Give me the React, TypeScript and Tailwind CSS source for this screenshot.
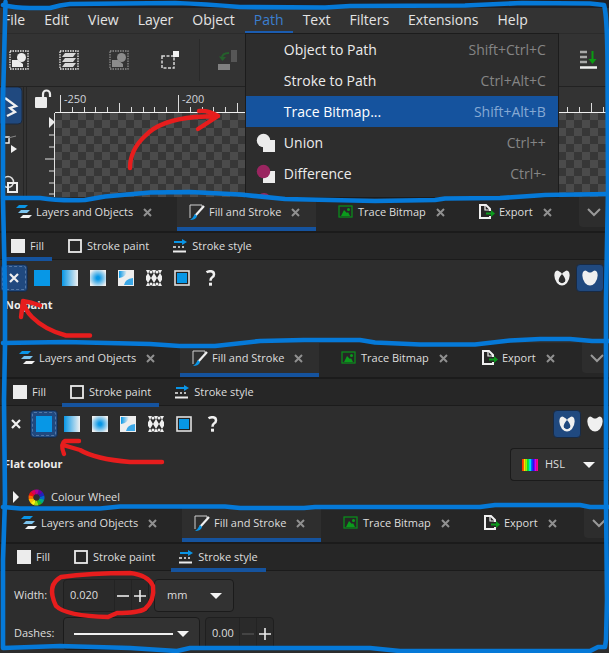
import type { ReactNode } from "react";

const menus = ["File", "Edit", "View", "Layer", "Object", "Path", "Text", "Filters", "Extensions", "Help"];

const pathMenu = [
  { label: "Object to Path", keys: "Shift+Ctrl+C" },
  { label: "Stroke to Path", keys: "Ctrl+Alt+C" },
  { label: "Trace Bitmap...", keys: "Shift+Alt+B", active: true },
  { label: "Union", keys: "Ctrl++", icon: "union" },
  { label: "Difference", keys: "Ctrl+-", icon: "difference" },
];

function Shape({ icon }: { icon?: string }) {
  if (!icon) return <span className="w-5" />;
  return (
    <svg className="h-5 w-5" viewBox="0 0 20 20">
      <rect x="7" y="7" width="12" height="12" fill="#ececec" />
      <circle cx="7.500" cy="7.500" r="6.700" fill={icon === "union" ? "#ececec" : "#9a2560"} />
    </svg>
  );
}

function MenuBar() {
  return (
    <nav className="relative flex h-[25px] shrink-0 gap-px bg-[#333333] text-[14px]">
      {menus.map((m) => (
        <div key={m} className="relative flex">
          <button
            className={
              m === "Path"
                ? "h-[25px] border-b-2 border-[#1b5cb0] px-[9px] leading-[22px] text-[#3b7fd0]"
                : "h-[25px] border-b-2 border-transparent px-[9px] leading-[22px] text-[#e4e4e4]"
            }
          >
            {m}
          </button>
          {m === "Path" && (
            <div className="absolute top-full left-0 z-10 h-[165px] w-[314px] overflow-hidden border border-[#1c1c1c] bg-[#2d2d2d]">
              {pathMenu.map((i) => (
                <button
                  key={i.label}
                  className={
                    i.active
                      ? "flex h-[31px] w-full items-center bg-[#15539e] pr-3 pl-[10px] text-white"
                      : "flex h-[31px] w-full items-center pr-3 pl-[10px] text-[#ececec]"
                  }
                >
                  <Shape icon={i.icon} />
                  <span className="ml-2">{i.label}</span>
                  <span className={i.active ? "ml-auto text-[#86a9d4]" : "ml-auto text-[#858585]"}>{i.keys}</span>
                </button>
              ))}
              <svg className="ml-[12px] h-4 w-5" viewBox="0 0 20 16">
                <circle cx="6" cy="11" r="7" fill="#9a2560" />
              </svg>
            </div>
          )}
        </div>
      ))}
    </nav>
  );
}

function SelectIcon({ kind }: { kind: "all" | "layers" | "none" }) {
  const c = kind === "none" ? "#8c8c8c" : "#ececec";
  return (
    <svg className="h-5 w-5" viewBox="0 0 20 20">
      <rect x="1" y="1" width="18" height="18" fill="none" stroke={c} strokeWidth="1.300" strokeDasharray="1.500 1" />
      {kind === "layers" ? (
        <g fill="#d8d8d8">
          <path d="M6 3h11l-3 4H3zM6 8h11l-3 4H3zM6 13h11l-3 4H3z" />
        </g>
      ) : (
        <g fill={c}>
          <path d="M3 10h6l5 4v3H3z" />
          <circle cx="12.500" cy="7.500" r="4.500" />
        </g>
      )}
    </svg>
  );
}

function Toolbar() {
  return (
    <div className="flex h-[54px] shrink-0 items-center border-y border-t-[#2b2b2b] border-b-[#222] bg-[#333333] pl-[9px] pr-3">
      <button aria-label="Select all"><SelectIcon kind="all" /></button>
      <button className="ml-[30px]" aria-label="Select in all layers"><SelectIcon kind="layers" /></button>
      <button className="ml-[30px]" aria-label="Deselect"><SelectIcon kind="none" /></button>
      <button className="ml-8" aria-label="Touch selection">
        <svg className="h-5 w-5" viewBox="0 0 20 20">
          <rect x="1" y="6" width="12" height="12" fill="none" stroke="#d8d8d8" strokeWidth="1.500" strokeDasharray="3 1.500" />
          <rect x="12" y="1" width="6" height="6" fill="#f2f2f2" />
        </svg>
      </button>
      <span className="ml-[18px] h-[42px] w-px bg-[#292929]" />
      <button className="ml-[17px]" aria-label="Rotate left">
        <svg className="h-5 w-[22px]" viewBox="0 0 22 20">
          <rect x="14" y="0" width="6" height="12" fill="#565656" />
          <rect x="1" y="14" width="12" height="6" fill="#808080" />
          <path d="M12 3q-7 0-7 5" fill="none" stroke="#25602c" strokeWidth="2" />
          <path d="M2 6.500l3.500 4.500 3.500-4z" fill="#25602c" />
        </svg>
      </button>
      <button className="ml-auto" aria-label="Lower to bottom">
        <svg className="h-5 w-[18px]" viewBox="0 0 18 20">
          <path d="M1 2h7M1 7h7M1 12h7" stroke="#a8a8a8" strokeWidth="2.500" />
          <path d="M13.500 1v9" stroke="#0a9a12" strokeWidth="2" />
          <path d="M9.500 9h8l-4 5z" fill="#0a9a12" />
          <path d="M1 17.500h17" stroke="#f0f0f0" strokeWidth="2.500" />
        </svg>
      </button>
    </div>
  );
}

const ticks = Array.from({ length: 47 }, (_, i) => i);

function Canvas() {
  return (
    <div className="flex h-[110px] bg-[#333333]">
      <div className="w-6 shrink-0 border-r border-[#252525]">
        <svg className="h-[110px] w-6" viewBox="0 0 24 110">
          <rect x="-4" y="0" width="26" height="37" rx="4" fill="#20497f" stroke="#1b2a40" />
          <path d="M5 11l11 8-6 2 5 4-8 4" fill="none" stroke="#f0f0f0" strokeWidth="2.300" />
          <rect x="3" y="50" width="6" height="6" fill="#222" stroke="#eee" strokeWidth="1.500" />
          <path d="M8 51l8-2" stroke="#888" />
          <path d="M11 58l6 4-6 4z" fill="#f0f0f0" />
          <circle cx="8" cy="95" r="5.500" fill="none" stroke="#ddd" strokeWidth="1.500" />
          <rect x="8" y="96" width="9" height="9" fill="none" stroke="#eee" strokeWidth="2" />
        </svg>
      </div>
      <div className="ml-[2px] w-[29px] shrink-0 border-l border-[#252525]">
        <svg className="h-[110px] w-7" viewBox="0 0 28 110">
          <rect x="8" y="10" width="12" height="11" rx="1" fill="#ececec" />
          <path d="M16 10V7a3.500 3.500 0 0 1 7 0v3" fill="none" stroke="#ececec" strokeWidth="2.200" />
          <path d="M22 30l6 5-6 6z" fill="#ececec" />
          <path d="M27.500 26v84M22 48h6M22 60h6M18 72h10M22 84h6M22 96h6M22 107h6" stroke="#e0e0e0" />
        </svg>
      </div>
      <div className="min-w-0 flex-1">
        <svg className="block h-[26px] w-full">
          {ticks.map((i) => {
            const x = 5.5 + Math.round(i * 11.8);
            const top = i % 10 === 0 ? 8 : i % 5 === 0 ? 16 : 20;
            return <path key={i} d={`M${x} ${top}V26`} stroke="#dcdcdc" />;
          })}
          <path d="M0 25.500H700" stroke="#f0f0f0" />
          <text x="9" y="16" fill="#d0d4da" fontSize="11">-250</text>
          <text x="127" y="16" fill="#d0d4da" fontSize="11">-200</text>
        </svg>
        <div className="h-[84px] bg-[repeating-conic-gradient(#4b4b4b_0_25%,#373737_0_50%)] bg-[length:16px_16px] bg-[position:-1px_-1px]" />
      </div>
    </div>
  );
}

function LayersIcon() {
  return (
    <svg className="h-4 w-4" viewBox="0 0 16 16">
      <path d="M3 1h9l-3 3H0z" fill="#0a95e6" />
      <path d="M5 6h9l-3 3H2z" fill="#7cc4ee" />
      <path d="M7 11h9l-3 3H4z" fill="#f0f0f0" />
    </svg>
  );
}
function BrushIcon() {
  return (
    <svg className="h-4 w-4" viewBox="0 0 16 16">
      <path d="M1 14V1h12v2" fill="none" stroke="#cfcfcf" />
      <path d="M15 2L6 12" stroke="#f0f0f0" strokeWidth="2.200" />
      <path d="M6 10l2 2q-1 4-7 4 3-2 5-6z" fill="#0a95e6" />
    </svg>
  );
}
function TraceIcon() {
  return (
    <svg className="h-4 w-4" viewBox="0 0 16 16">
      <rect x="1" y="2" width="13" height="11" fill="none" stroke="#0b8a1c" strokeWidth="1.300" />
      <path d="M3 12l3-6 3 3 1-1 2 4z" fill="#0b9a1c" />
      <circle cx="10.500" cy="5.500" r="1.500" fill="#0b9a1c" />
    </svg>
  );
}
function ExportIcon() {
  return (
    <svg className="h-4 w-4" viewBox="0 0 16 16">
      <path d="M11 7V5L7 1H1v13h10v-2" fill="none" stroke="#f0f0f0" strokeWidth="2" />
      <path d="M6 1v5h5" fill="none" stroke="#f0f0f0" strokeWidth="1.200" />
      <path d="M7 9.500h6" stroke="#0b9a1c" strokeWidth="2" />
      <path d="M12 6l4 3.500-4 3.500z" fill="#0b9a1c" />
    </svg>
  );
}
function Cross() {
  return (
    <svg className="h-[9px] w-[9px]" viewBox="0 0 9 9">
      <path d="M1 1l7 7M8 1l-7 7" stroke="#909090" strokeWidth="2" />
    </svg>
  );
}

function DockTab({ icon, label, width, active }: { icon: ReactNode; label: string; width: string; active?: boolean }) {
  return (
    <div
      className={`${width} flex h-[34px] shrink-0 items-center border-b-4 pl-3 ${
        active ? "border-[#15539e] bg-[#2e2e2e]" : "border-transparent"
      }`}
    >
      <button className="flex items-center gap-1 whitespace-nowrap">
        {icon}
        {label}
      </button>
      <button className="ml-[10px]" aria-label={`Close ${label}`}>
        <Cross />
      </button>
    </div>
  );
}

function Dock({ pad, subPad, sub, children }: { pad: string; subPad: string; sub: string; children: ReactNode }) {
  const subs = [
    { label: "Fill", icon: <rect width="14" height="14" fill="#ececec" /> },
    { label: "Stroke paint", icon: <rect x="1" y="1" width="12" height="12" fill="none" stroke="#ececec" strokeWidth="1.800" /> },
    {
      label: "Stroke style",
      icon: (
        <g>
          <path d="M1 3h9" stroke="#0a95e6" strokeWidth="2" />
          <path d="M9 0l5 3-5 3z" fill="#0a95e6" />
          <path d="M0 8h3M5 8h2M9 8h2" stroke="#ececec" strokeWidth="1.500" />
          <path d="M0 12.500h13" stroke="#ececec" strokeWidth="2" />
        </g>
      ),
    },
  ];
  return (
    <>
      <div className={`${pad} flex overflow-hidden border-b border-[#1b1b1b] bg-[#262626]`}>
        <DockTab icon={<LayersIcon />} label="Layers and Objects" width="w-[173px]" />
        <DockTab icon={<BrushIcon />} label="Fill and Stroke" width="w-[139px]" active />
        <div className="w-[10px] shrink-0" />
        <DockTab icon={<TraceIcon />} label="Trace Bitmap" width="w-[141px]" />
        <DockTab icon={<ExportIcon />} label="Export" width="w-[112px]" />
        <button className="flex h-[30px] flex-1 shrink-0 items-center rounded-bl bg-[#2d2d2d] pl-2" aria-label="More tabs">
          <svg className="h-3 w-[14px] shrink-0" viewBox="0 0 14 12">
            <path d="M1 3l6 6 6-6" fill="none" stroke="#999" strokeWidth="2" />
          </svg>
        </button>
      </div>
      <div className={`${subPad} flex h-[28px] gap-2 border-t border-b border-[#1b1b1b] bg-[#262626]`}>
        {subs.map((s) => (
          <button
            key={s.label}
            className={`flex h-7 items-center gap-[5px] border-b-4 px-2 pt-[2px] whitespace-nowrap ${
              s.label === sub ? "border-[#15539e]" : "border-transparent"
            }`}
          >
            <svg className="h-[14px] w-[14px]" viewBox="0 0 14 14">{s.icon}</svg>
            {s.label}
          </button>
        ))}
      </div>
      {children}
    </>
  );
}

const heart = "M1 2Q3-1 6 2Q8 3 10 2Q13-1 15 2Q17 7 13 13Q8 18 3 13Q-1 7 1 2Z";

function PaintRow({ id, selected, rule, pad }: { id: string; selected: number; rule: number; pad: string }) {
  const icons = [
    <path d="M4 4l8 8M12 4l-8 8" stroke="#f0f0f0" strokeWidth="2.200" />,
    <rect width="16" height="16" fill="#0797e6" />,
    <rect width="16" height="16" fill={`url(#${id}l)`} />,
    <rect width="16" height="16" fill={`url(#${id}r)`} />,
    <g>
      <rect width="16" height="16" fill="#eee" />
      <path d="M1 1h8q-1 6-8 7z" fill={`url(#${id}l)`} />
      <path d="M15 8v7H6q1-6 9-7z" fill="#3ba7e6" />
    </g>,
    <g fill="#f0f0f0">
      {[2, 8, 14].map((x) => (
        <path key={x} d={`M${x - 2} 0h4l-2 4zM${x} 3l3 5-3 5-3-5zM${x - 2} 16h4l-2-4z`} />
      ))}
      <circle cx="5" cy="2" r="1.500" />
      <circle cx="11" cy="2" r="1.500" />
      <circle cx="5" cy="14" r="1.500" />
      <circle cx="11" cy="14" r="1.500" />
    </g>,
    <g>
      <rect x="1" y="1" width="14" height="14" fill="#222" stroke="#e0e0e0" strokeWidth="1.600" />
      <rect x="3" y="3" width="10" height="10" fill="#0797e6" />
    </g>,
    <g>
      <path d="M4.500 2.200Q6 1.200 8.500 1.200Q12 1.200 12 4.500Q12 6.500 10 7.500Q8.500 8.500 8.500 10.800" fill="none" stroke="#f0f0f0" strokeWidth="2.500" />
      <rect x="7" y="12.700" width="3" height="3" fill="#f0f0f0" />
    </g>,
  ];
  const names = ["No paint", "Flat colour", "Linear gradient", "Radial gradient", "Mesh gradient", "Pattern", "Swatch", "Unset"];
  const on = "border-[#182a44] bg-[#20497f] outline-1 outline-dashed -outline-offset-3 outline-[#5377a5]";
  const drop = rule === 0 ? "#20497f" : "#2d2d2d";
  return (
    <div className={`${pad} flex pt-1`}>
      {icons.map((g, i) => (
        <button
          key={i}
          aria-label={names[i]}
          className={`flex h-7 w-7 items-center justify-center rounded border ${i === selected ? on : "border-transparent"}`}
        >
          <svg className="h-4 w-4" viewBox="0 0 16 16">
            <defs>
              <linearGradient id={`${id}l`}>
                <stop offset="0" stopColor="#0797e6" />
                <stop offset="1" stopColor="#f0f0f0" />
              </linearGradient>
              <radialGradient id={`${id}r`} r="0.600">
                <stop offset="0.150" stopColor="#0797e6" />
                <stop offset="1" stopColor="#f0f0f0" />
              </radialGradient>
            </defs>
            {g}
          </svg>
        </button>
      ))}
      <div className="ml-auto flex">
        {[0, 1].map((i) => (
          <button
            key={i}
            aria-label={i ? "Fill non-zero" : "Fill even-odd"}
            className={`flex h-7 w-7 items-center justify-center rounded border ${
              i === rule ? "border-[#182a44] bg-[#20497f]" : "border-transparent"
            }`}
          >
            <svg className="h-4 w-4" viewBox="0 0 16 16">
              <path d={heart} fill="#f0f0f0" />
              {i === 0 && (
                <g>
                  <path d="M5.500 0L8 4L10.500 0z" fill={drop} />
                  <path d="M8 4Q12.500 9 11 11.500Q8 15 5 11.500Q3.500 9 8 4z" fill={drop} />
                </g>
              )}
            </svg>
          </button>
        ))}
      </div>
    </div>
  );
}

function Caret({ place }: { place: string }) {
  return (
    <svg className={`${place} pointer-events-none h-[6px] w-3`} viewBox="0 0 12 6">
      <path d="M0 0h12L6 6z" fill="#f4f4f4" />
    </svg>
  );
}

function Spin({ id, label, value, width, dim }: { id: string; label?: string; value: string; width: string; dim?: boolean }) {
  return (
    <div className={`${width} flex h-[33px] items-stretch rounded border border-[#1f1f1f] bg-[#2a2a2a]`}>
      <input id={id} aria-label={label} defaultValue={value} className="min-w-0 flex-1 bg-transparent pl-[6px] outline-none" />
      <button className="flex w-[17px] items-center justify-center border-l border-[#232323]" aria-label="Decrease">
        <svg className="h-3 w-3" viewBox="0 0 12 12"><path d="M0 6h12" stroke={dim ? "#4c4c4c" : "#ececec"} strokeWidth="1.600" /></svg>
      </button>
      <button className="flex w-[17px] items-center justify-center border-l border-[#232323]" aria-label="Increase">
        <svg className="h-3 w-3" viewBox="0 0 12 12"><path d="M0 6h12M6 0v12" stroke="#ececec" strokeWidth="1.600" /></svg>
      </button>
    </div>
  );
}

const wheel = ["#e11", "#f60", "#fb0", "#fe1", "#9d1", "#2b2", "#0a8", "#06c", "#22b", "#60a", "#a09", "#d05"];

function Annotations() {
  return (
    <svg className="pointer-events-none absolute inset-0 z-20 h-full w-full" viewBox="0 0 609 653" preserveAspectRatio="none" fill="none" strokeLinecap="round" strokeLinejoin="round">
      <g stroke="#0579d8" strokeWidth="4.600">
        <path d="M3 5Q15 8 30 8L50 8Q60 5 70 4L175 3Q205 4 240 7L325 7.500L350 6L465 5.500L522 3L590 3.500L604 5Q607 15 607.500 60L608 190L606 300L606 500L607 600L606 640L605 647H598L590 651L400 651L370 648L190 648L177 651L130 648L60 646L3 648L3 560L5 500L4 400L5 345L5 290L3 200L3 100L5.500 2" />
        <path d="M3 198L40 198Q60 201 85 200L105 196.500L150 192.500L190 192L240 194.500L285 199L375 201L435 200L445 198.500L500 198L545 195L609 194" />
        <path d="M3 343L65 342L150 344L180 346L215 346L260 341L304 340L360 340L375 342.500L420 344.500L475 344.500L510 340.500L540 339L570 339L592 341L609 341" />
        <path d="M3 507L20 508.500L100 508.500L120 506.500L225 506.500L240 508L304 508L315 507L480 507L495 505L580 505L590 507L608 507" />
      </g>
      <g stroke="#e71d1d" strokeWidth="4.400">
        <path d="M130 168Q130 150 145 136Q160 120 195 117L218 116M199 111Q208 110 218 116L198 129" />
        <path d="M90 335.500H66Q45 330 32 317Q25 310 23 301M21 317L23 301Q31 302 40 305.500" />
        <path d="M162 462H130Q95 459 80 450L63 445M79 441H65Q60 444 64 454" />
        <path d="M61 577Q90 573 130 573Q148 575 153 586Q155 600 145 609Q138 613 117 613L108 617Q66 616 56 606Q46 585 61 577Z" />
      </g>
    </svg>
  );
}

export default function App() {
  return (
    <main className="relative w-full overflow-hidden bg-[#2d2d2d] font-['Open_Sans','Noto_Sans',sans-serif] text-[11px] text-[#dedede]">
      <section className="flex flex-col">
        <div className="h-2 bg-[#1f2025]" />
        <div className="-ml-[6px] flex flex-col">
          <MenuBar />
        </div>
        <Toolbar />
        <Canvas />
      </section>

      <section className="h-[146px]">
        <Dock pad="pl-1" subPad="pl-[3px]" sub="Fill">
          <PaintRow id="a" selected={0} rule={1} pad="pr-[5px]" />
          <h2 className="mt-1 pl-[5px] leading-[18px] font-bold text-[#ececec]">No paint</h2>
        </Dock>
      </section>

      <section className="h-[165px]">
        <Dock pad="pl-[7px]" subPad="pl-[5px]" sub="Stroke paint">
          <PaintRow id="b" selected={1} rule={0} pad="pl-[2px]" />
          <div className="mt-[10px] flex items-center justify-between pl-1">
            <h2 className="font-bold text-[#ececec]">Flat colour</h2>
            <div className="relative flex h-[33px] w-[99px] items-center rounded-l border border-r-0 border-[#1b1b1b] bg-[#323232]">
              <svg className="pointer-events-none absolute left-[11px] h-3 w-4" viewBox="0 0 16 12">
                {["#f30", "#fd0", "#8f0", "#0e4", "#0ee", "#06f", "#30f", "#c0f", "#f08"].map((c, i) => (
                  <rect key={c} x={i * 1.78} width="1.900" height="12" fill={c} />
                ))}
              </svg>
              <select aria-label="Colour model" className="h-full w-full appearance-none bg-transparent pl-[34px] outline-none">
                <option>HSL</option>
              </select>
              <Caret place="absolute right-[14px]" />
            </div>
          </div>
          <button className="mt-[7px] flex h-[18px] items-center pl-[13px]">
            <svg className="h-3 w-[7px]" viewBox="0 0 7 12"><path d="M0 0l6 6-6 6z" fill="#f4f4f4" /></svg>
            <svg className="ml-2 h-[17px] w-[17px]" viewBox="-9 -9 18 18">
              {wheel.map((c, i) => (
                <path key={c} d="M0 -6A6 6 0 0 1 3.200 -5.100" fill="none" stroke={c} strokeWidth="5" transform={`rotate(${-75 - i * 30})`} />
              ))}
            </svg>
            <span className="ml-[6px]">Colour Wheel</span>
          </button>
        </Dock>
      </section>

      <section>
        <Dock pad="pl-[9px]" subPad="pl-[9px]" sub="Stroke style">
          <div className="grid grid-cols-[49px_1fr] gap-y-[5px] pt-2 pl-[14px]">
            <label htmlFor="width" className="self-center">Width:</label>
            <div className="flex gap-[5px]">
              <Spin id="width" value="0.020" width="w-[86px]" />
              <div className="relative flex w-20 items-center rounded border border-[#1b1b1b] bg-[#323232]">
                <select aria-label="Unit" className="h-full w-full appearance-none bg-transparent pl-3 outline-none">
                  <option>mm</option>
                </select>
                <Caret place="absolute right-[11px]" />
              </div>
            </div>
            <label htmlFor="dashes" className="self-center">Dashes:</label>
            <div className="flex gap-[5px]">
              <button id="dashes" className="flex w-[137px] items-center gap-1 rounded border border-[#1b1b1b] bg-[#323232] px-[10px]">
                <span className="h-[2px] flex-1 bg-[#f0f0f0]" />
                <Caret place="shrink-0" />
              </button>
              <Spin id="offset" label="Dash offset" value="0.00" width="w-[69px]" dim />
            </div>
          </div>
          <div className="h-[3px]" />
        </Dock>
      </section>
      <Annotations />
    </main>
  );
}
